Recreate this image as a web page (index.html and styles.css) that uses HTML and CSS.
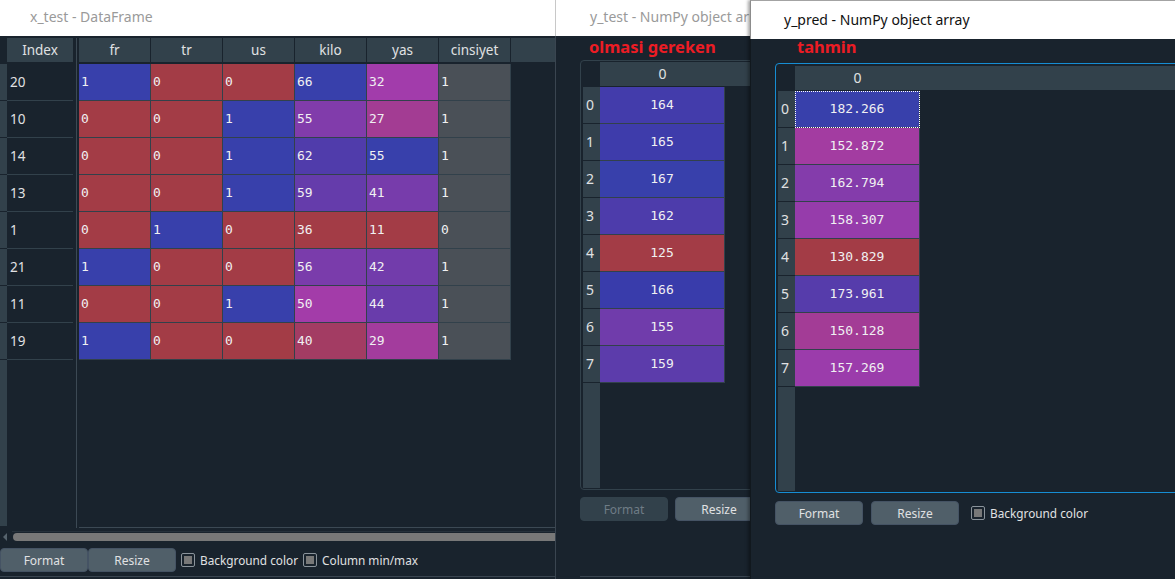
FILE: index.html
```html
<!DOCTYPE html>
<html>
<head>
<meta charset="utf-8">
<title>Variable explorer</title>
<link rel="stylesheet" href="styles.css">
</head>
<body>

<section class="win win-df">
  <header class="titlebar inactive">x_test - DataFrame</header>
  <div class="df-body">
    <div class="df-tables">
      <div class="idx-pane">
        <div class="idx-head"><div class="corner"></div><div class="hcell idx-h">Index</div></div>
        <div class="idx-row"><div class="vh"></div><div class="icell">20</div></div>
        <div class="idx-row"><div class="vh"></div><div class="icell">10</div></div>
        <div class="idx-row"><div class="vh"></div><div class="icell">14</div></div>
        <div class="idx-row"><div class="vh"></div><div class="icell">13</div></div>
        <div class="idx-row"><div class="vh"></div><div class="icell">1</div></div>
        <div class="idx-row"><div class="vh"></div><div class="icell">21</div></div>
        <div class="idx-row"><div class="vh"></div><div class="icell">11</div></div>
        <div class="idx-row"><div class="vh"></div><div class="icell">19</div></div>
        <div class="idx-fill"><div class="vh"></div></div>
      </div>
      <div class="splitter"></div>
      <div class="data-pane">
        <div class="head-row">
          <div class="hcell">fr</div><div class="hcell">tr</div><div class="hcell">us</div>
          <div class="hcell">kilo</div><div class="hcell">yas</div><div class="hcell">cinsiyet</div>
          <div class="hfill"></div>
        </div>
        <div class="drow">
          <div class="dcell" style="background:rgb(56,64,171)">1</div>
          <div class="dcell" style="background:rgb(163,60,70)">0</div>
          <div class="dcell" style="background:rgb(163,60,70)">0</div>
          <div class="dcell" style="background:rgb(56,64,171)">66</div>
          <div class="dcell" style="background:rgb(162,60,171)">32</div>
          <div class="dcell grey">1</div>
        </div>
        <div class="drow">
          <div class="dcell" style="background:rgb(163,60,70)">0</div>
          <div class="dcell" style="background:rgb(163,60,70)">0</div>
          <div class="dcell" style="background:rgb(56,64,171)">1</div>
          <div class="dcell" style="background:rgb(129,60,171)">55</div>
          <div class="dcell" style="background:rgb(163,60,147)">27</div>
          <div class="dcell grey">1</div>
        </div>
        <div class="drow">
          <div class="dcell" style="background:rgb(163,60,70)">0</div>
          <div class="dcell" style="background:rgb(163,60,70)">0</div>
          <div class="dcell" style="background:rgb(56,64,171)">1</div>
          <div class="dcell" style="background:rgb(80,60,171)">62</div>
          <div class="dcell" style="background:rgb(56,64,171)">55</div>
          <div class="dcell grey">1</div>
        </div>
        <div class="drow">
          <div class="dcell" style="background:rgb(163,60,70)">0</div>
          <div class="dcell" style="background:rgb(163,60,70)">0</div>
          <div class="dcell" style="background:rgb(56,64,171)">1</div>
          <div class="dcell" style="background:rgb(101,60,171)">59</div>
          <div class="dcell" style="background:rgb(119,60,171)">41</div>
          <div class="dcell grey">1</div>
        </div>
        <div class="drow">
          <div class="dcell" style="background:rgb(163,60,70)">0</div>
          <div class="dcell" style="background:rgb(56,64,171)">1</div>
          <div class="dcell" style="background:rgb(163,60,70)">0</div>
          <div class="dcell" style="background:rgb(163,60,70)">36</div>
          <div class="dcell" style="background:rgb(163,60,70)">11</div>
          <div class="dcell grey">0</div>
        </div>
        <div class="drow">
          <div class="dcell" style="background:rgb(56,64,171)">1</div>
          <div class="dcell" style="background:rgb(163,60,70)">0</div>
          <div class="dcell" style="background:rgb(163,60,70)">0</div>
          <div class="dcell" style="background:rgb(122,60,171)">56</div>
          <div class="dcell" style="background:rgb(114,60,171)">42</div>
          <div class="dcell grey">1</div>
        </div>
        <div class="drow">
          <div class="dcell" style="background:rgb(163,60,70)">0</div>
          <div class="dcell" style="background:rgb(163,60,70)">0</div>
          <div class="dcell" style="background:rgb(56,64,171)">1</div>
          <div class="dcell" style="background:rgb(163,60,169)">50</div>
          <div class="dcell" style="background:rgb(105,60,171)">44</div>
          <div class="dcell grey">1</div>
        </div>
        <div class="drow">
          <div class="dcell" style="background:rgb(56,64,171)">1</div>
          <div class="dcell" style="background:rgb(163,60,70)">0</div>
          <div class="dcell" style="background:rgb(163,60,70)">0</div>
          <div class="dcell" style="background:rgb(163,60,99)">40</div>
          <div class="dcell" style="background:rgb(163,60,157)">29</div>
          <div class="dcell grey">1</div>
        </div>
      </div>
    </div>
    <div class="hscroll"><span class="arrow-left"></span><div class="track"><div class="handle"></div></div></div>
    <div class="toolbar tb-df">
      <button class="btn">Format</button>
      <button class="btn">Resize</button>
      <label class="check"><span class="cb"></span>Background color</label>
      <label class="check"><span class="cb"></span>Column min/max</label>
    </div>
    <div class="bottom-line"></div>
  </div>
</section>

<section class="win win-ytest">
  <header class="titlebar inactive">y_test - NumPy object array</header>
  <div class="arr-body">
    <div class="note">olmasi gereken</div>
    <div class="frame">
      <div class="vcol">
        <div class="vcorner"></div>
        <div class="vhn">0</div><div class="vhn">1</div><div class="vhn">2</div><div class="vhn">3</div>
        <div class="vhn">4</div><div class="vhn">5</div><div class="vhn">6</div><div class="vhn">7</div>
        <div class="vfill"></div>
      </div>
      <div class="dcol">
        <div class="ahead"><div class="ahcell">0</div></div>
        <div class="acell" style="background:rgb(67,60,171)">164</div>
        <div class="acell" style="background:rgb(62,60,171)">165</div>
        <div class="acell" style="background:rgb(56,64,171)">167</div>
        <div class="acell" style="background:rgb(77,60,171)">162</div>
        <div class="acell" style="background:rgb(163,60,70)">125</div>
        <div class="acell" style="background:rgb(57,60,171)">166</div>
        <div class="acell" style="background:rgb(112,60,171)">155</div>
        <div class="acell" style="background:rgb(92,60,171)">159</div>
      </div>
    </div>
    <div class="toolbar tb-arr">
      <button class="btn disabled">Format</button>
      <button class="btn">Resize</button>
    </div>
    <div class="bottom-line"></div>
  </div>
</section>

<section class="win win-ypred">
  <header class="titlebar active">y_pred - NumPy object array</header>
  <div class="arr-body">
    <div class="note">tahmin</div>
    <div class="frame focused">
      <div class="vcol">
        <div class="vcorner"></div>
        <div class="vhn">0</div><div class="vhn">1</div><div class="vhn">2</div><div class="vhn">3</div>
        <div class="vhn">4</div><div class="vhn">5</div><div class="vhn">6</div><div class="vhn">7</div>
        <div class="vfill"></div>
      </div>
      <div class="dcol">
        <div class="ahead"><div class="ahcell">0</div></div>
        <div class="acell current" style="background:rgb(56,64,171)">182.266</div>
        <div class="acell" style="background:rgb(163,60,161)">152.872</div>
        <div class="acell" style="background:rgb(132,60,171)">162.794</div>
        <div class="acell" style="background:rgb(150,60,171)">158.307</div>
        <div class="acell" style="background:rgb(163,60,70)">130.829</div>
        <div class="acell" style="background:rgb(86,60,171)">173.961</div>
        <div class="acell" style="background:rgb(163,60,150)">150.128</div>
        <div class="acell" style="background:rgb(155,60,171)">157.269</div>
      </div>
    </div>
    <div class="toolbar tb-arr">
      <button class="btn">Format</button>
      <button class="btn">Resize</button>
      <label class="check"><span class="cb"></span>Background color</label>
    </div>
  </div>
</section>

</body>
</html>
```

FILE: styles.css
```css
* { box-sizing: border-box; }
html, body { margin: 0; padding: 0; }
body {
  width: 1175px;
  height: 579px;
  overflow: hidden;
  position: relative;
  background: #19232d;
  font-family: "Noto Sans", "DejaVu Sans", sans-serif;
  color: #e0e1e3;
}

/* ---------- windows (free desktop) ---------- */
.win {
  position: absolute;
  top: 0;
  height: 579px;
  display: flex;
  flex-direction: column;
  background: #19232d;
  overflow: hidden;
}
.win-df { left: 0; width: 555px; }
.win-ytest { left: 555px; width: 620px; }
.win-ypred { left: 750px; width: 425px; box-shadow: -2px 0 3px rgba(0, 0, 0, 0.35); }

.titlebar {
  flex: none;
  background: #fff;
  font-size: 14px;
  white-space: nowrap;
  overflow: hidden;
}
.titlebar.inactive { height: 36px; line-height: 34px; color: #9a9a9a; }
.win-df .titlebar { padding-left: 30px; }
.win-ytest .titlebar { padding-left: 34px; border-left: 1px solid #c8c8c8; }
.titlebar.active {
  height: 39px;
  line-height: 38px;
  color: #111;
  padding-left: 33px;
  border-top: 1px solid #a3a3a3;
  border-left: 1px solid #8c8c8c;
}

/* ---------- DataFrame window ---------- */
.df-body {
  flex: 1;
  display: flex;
  flex-direction: column;
  padding-top: 2px;
}
.df-tables { display: flex; height: 490px; flex: none; }
.idx-pane { width: 74px; height: 488px; display: flex; flex-direction: column; }
.idx-head { display: flex; height: 24px; margin-bottom: 2px; flex: none; }
.corner { width: 7px; }
.hcell {
  width: 71px;
  margin-right: 1px;
  background: #32414b;
  text-align: center;
  line-height: 24px;
  font-size: 13.5px;
  flex: none;
}
.idx-h { width: 66px; margin-right: 0; }
.idx-row { display: flex; height: 37px; flex: none; }
.vh { width: 7px; background: #32414b; border-bottom: 1px solid #19232d; }
.icell {
  width: 66px;
  border-bottom: 1px solid #32414b;
  padding-left: 3px;
  line-height: 36px;
  font-size: 13.5px;
}
.idx-fill { flex: 1; display: flex; }
.idx-fill .vh { border-bottom: none; }

.splitter {
  width: 5px;
  flex: none;
  background: linear-gradient(to right, transparent 2px, #3c4954 2px, #3c4954 3px, transparent 3px);
}
.data-pane {
  flex: 1;
  display: flex;
  flex-direction: column;
  border-bottom: 1px solid #3c4954;
}
.head-row { display: flex; height: 24px; margin-bottom: 2px; flex: none; }
.hfill { flex: 1; background: #32414b; }
.drow { display: flex; height: 37px; flex: none; }
.dcell {
  width: 72px;
  border-right: 1px solid #32414b;
  border-bottom: 1px solid #32414b;
  padding-left: 2px;
  line-height: 36px;
  font-family: "DejaVu Sans Mono", "Liberation Mono", monospace;
  font-size: 13px;
  color: #f0f0f2;
}
.dcell.grey { background: #4a5057; }

.hscroll { display: flex; align-items: center; height: 11px; margin-top: 3px; flex: none; }
.arrow-left {
  width: 0;
  height: 0;
  margin: 0 5px 0 3px;
  border-top: 4px solid transparent;
  border-bottom: 4px solid transparent;
  border-right: 4px solid #56636d;
}
.track { flex: 1; height: 11px; padding: 1px 0 1px 1px; border-top: 1px solid #26313b; }
.handle { height: 100%; background: #787878; border-radius: 4px 0 0 4px; }

/* ---------- toolbars ---------- */
.toolbar { display: flex; align-items: center; height: 24px; flex: none; }
.tb-df { margin-top: 6px; }
.btn {
  width: 88px;
  height: 24px;
  padding: 0;
  background: #505f69;
  border: 1px solid #455364;
  border-radius: 4px;
  color: #e0e1e3;
  font-family: "Noto Sans", "DejaVu Sans", sans-serif;
  font-size: 12px;
  flex: none;
}
.btn.disabled { background: #32414b; border-color: #32414b; color: #6f7c86; }
.check {
  display: flex;
  align-items: center;
  gap: 5px;
  font-size: 11.8px;
  color: #e0e1e3;
  margin-left: 5px;
  white-space: nowrap;
}
.cb {
  width: 14px;
  height: 14px;
  border: 1px solid #8a939b;
  border-radius: 2px;
  padding: 2px;
  background: #19232d;
}
.cb::after { content: ""; display: block; width: 100%; height: 100%; background: #787878; }

.bottom-line { margin-top: auto; height: 3px; border-top: 1px solid #3a4550; flex: none; }

/* ---------- array windows ---------- */
.arr-body {
  flex: 1;
  display: flex;
  flex-direction: column;
  padding-left: 24px;
}
.win-ytest .arr-body { border-left: 1px solid #3a4550; padding-top: 3px; }
.win-ypred .arr-body { border-left: 1px solid #11181e; }
.note {
  height: 16px;
  line-height: 16px;
  font-size: 16.5px;
  font-weight: 700;
  color: #ec1c24;
  flex: none;
  white-space: nowrap;
}
.win-ytest .note { padding-left: 9px; }
.win-ypred .note { padding-left: 22px; }

.frame {
  flex: none;
  width: 620px;
  height: 430px;
  margin-top: 5px;
  display: flex;
  border: 1px solid #32414b;
  border-radius: 4px;
  padding: 1px 0 1px 2px;
}
.frame.focused { margin-top: 8px; border-color: #168dd3; padding-top: 2px; }
.vcol { width: 17px; display: flex; flex-direction: column; flex: none; }
.vcorner { height: 25px; flex: none; }
.vhn {
  height: 37px;
  flex: none;
  background: #32414b;
  border-bottom: 1px solid #19232d;
  padding-left: 3px;
  line-height: 36px;
  font-size: 14px;
}
.vfill { flex: 1; background: #32414b; }
.dcol { flex: 1; display: flex; flex-direction: column; }
.ahead { height: 24px; margin-bottom: 1px; background: #32414b; display: flex; flex: none; }
.ahcell { width: 125px; text-align: center; line-height: 24px; font-size: 14px; }
.acell {
  width: 125px;
  height: 37px;
  flex: none;
  border-right: 1px solid #32414b;
  border-bottom: 1px solid #32414b;
  text-align: center;
  line-height: 36px;
  font-family: "DejaVu Sans Mono", "Liberation Mono", monospace;
  font-size: 13px;
  color: #f0f0f2;
}
.acell.current { outline: 1px dotted #ffffff; outline-offset: -1px; }

.tb-arr { margin-top: 7px; gap: 7px; }
.win-ypred .tb-arr { gap: 8px; margin-top: 8px; }
.tb-arr .check { margin-left: 4px; }
```
